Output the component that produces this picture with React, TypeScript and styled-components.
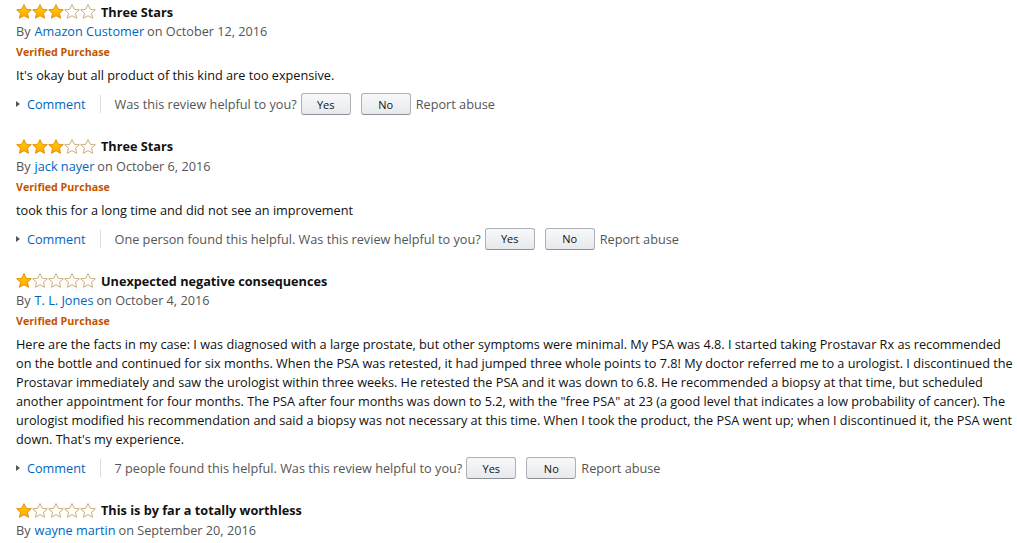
import React from "react";
import styled, { createGlobalStyle } from "styled-components";

const Global = createGlobalStyle`
  html, body { margin: 0; padding: 0; background: #fff; }
  body { font-family: "Open Sans", "Noto Sans", Arial, sans-serif; color: #111; }
`;

const Page = styled.div`
  padding: 2px 0 0 16px;
  display: flex;
  flex-direction: column;
  gap: 20.5px;
`;

const Review = styled.div`
  display: flex;
  flex-direction: column;
`;

const TitleRow = styled.div`
  display: flex;
  align-items: center;
  gap: 5px;
  height: 19px;
`;

const Title = styled.span`
  font-size: 12.7px;
  font-weight: 700;
  color: #111;
`;

const Stars = styled.span`
  display: inline-flex;
  gap: 0;
`;

const Byline = styled.div`
  font-size: 12.7px;
  color: #555;
  height: 21px;
  line-height: 20px;
`;

const Link = styled.a`
  color: #0066c0;
  text-decoration: none;
  margin: 0 3px 0 4px;
`;

const Verified = styled.div`
  font-size: 10.7px;
  font-weight: 700;
  color: #c45500;
  height: 20px;
  line-height: 20px;
`;

const Body = styled.p`
  margin: 4px 0 0;
  font-size: 12.7px;
  line-height: 19px;
  color: #111;
`;

const Actions = styled.div`
  display: flex;
  align-items: center;
  margin-top: 7px;
  height: 24px;
  font-size: 12.7px;
  color: #555;
`;

const Toggle = styled.span`
  display: inline-flex;
  align-items: center;
  gap: 7px;
  color: #0066c0;
  padding-right: 14px;
  border-right: 1px solid #ddd;
  height: 18px;
  margin-right: 14px;
`;

const Caret = styled.span`
  width: 0;
  height: 0;
  border-top: 3px solid transparent;
  border-bottom: 3px solid transparent;
  border-left: 4px solid #555;
`;

const Button = styled.button<{ $first?: boolean }>`
  font-family: inherit;
  font-size: 11px;
  color: #111;
  width: 50px;
  height: 22px;
  margin-left: ${(p) => (p.$first ? "4px" : "10px")};
  border: 1px solid #adb1b8;
  border-bottom-color: #8d9096;
  border-radius: 3px;
  background: linear-gradient(to bottom, #f7f8fa, #e7e9ec);
  padding: 0;
`;

const Abuse = styled.span`
  margin-left: 5px;
`;

const Star: React.FC<{ filled: boolean }> = ({ filled }) => (
  <svg width="16" height="15" viewBox="0 0 16 15">
    <defs>
      <linearGradient id="sg" x1="0" y1="0" x2="0" y2="1">
        <stop offset="0" stopColor="#ffce00" />
        <stop offset="1" stopColor="#ffa700" />
      </linearGradient>
    </defs>
    <path
      d="M8 0.6 L10.2 5.2 L15.3 5.8 L11.5 9.2 L12.6 14.3 L8 11.7 L3.4 14.3 L4.5 9.2 L0.7 5.8 L5.8 5.2 Z"
      fill={filled ? "url(#sg)" : "#fff"}
      stroke={filled ? "#e28a00" : "#c8a46a"}
      strokeWidth="0.9"
      strokeLinejoin="round"
    />
  </svg>
);

type R = {
  stars: number;
  title: string;
  author: string;
  date: string;
  verified?: boolean;
  body?: string;
  helpful?: string;
  actions?: boolean;
};

const reviews: R[] = [
  {
    stars: 3,
    title: "Three Stars",
    author: "Amazon Customer",
    date: "October 12, 2016",
    verified: true,
    body: "It's okay but all product of this kind are too expensive.",
    actions: true,
  },
  {
    stars: 3,
    title: "Three Stars",
    author: "jack nayer",
    date: "October 6, 2016",
    verified: true,
    body: "took this for a long time and did not see an improvement",
    helpful: "One person found this helpful. ",
    actions: true,
  },
  {
    stars: 1,
    title: "Unexpected negative consequences",
    author: "T. L. Jones",
    date: "October 4, 2016",
    verified: true,
    body:
      'Here are the facts in my case: I was diagnosed with a large prostate, but other symptoms were minimal. My PSA was 4.8. I started taking Prostavar Rx as recommended on the bottle and continued for six months. When the PSA was retested, it had jumped three whole points to 7.8! My doctor referred me to a urologist. I discontinued the Prostavar immediately and saw the urologist within three weeks. He retested the PSA and it was down to 6.8. He recommended a biopsy at that time, but scheduled another appointment for four months. The PSA after four months was down to 5.2, with the "free PSA" at 23 (a good level that indicates a low probability of cancer). The urologist modified his recommendation and said a biopsy was not necessary at this time. When I took the product, the PSA went up; when I discontinued it, the PSA went down. That\'s my experience.',
    helpful: "7 people found this helpful. ",
    actions: true,
  },
  {
    stars: 1,
    title: "This is by far a totally worthless",
    author: "wayne martin",
    date: "September 20, 2016",
  },
];

export default function App() {
  return (
    <>
      <Global />
      <Page>
        {reviews.map((r, i) => (
          <Review key={i}>
            <TitleRow>
              <Stars>
                {[0, 1, 2, 3, 4].map((s) => (
                  <Star key={s} filled={s < r.stars} />
                ))}
              </Stars>
              <Title>{r.title}</Title>
            </TitleRow>
            <Byline>
              By<Link href="#">{r.author}</Link>on {r.date}
            </Byline>
            {r.verified && <Verified>Verified Purchase</Verified>}
            {r.body && <Body>{r.body}</Body>}
            {r.actions && (
              <Actions>
                <Toggle>
                  <Caret />
                  Comment
                </Toggle>
                <span>{r.helpful || ""}Was this review helpful to you?</span>
                <Button $first>Yes</Button>
                <Button>No</Button>
                <Abuse>Report abuse</Abuse>
              </Actions>
            )}
          </Review>
        ))}
      </Page>
    </>
  );
}
